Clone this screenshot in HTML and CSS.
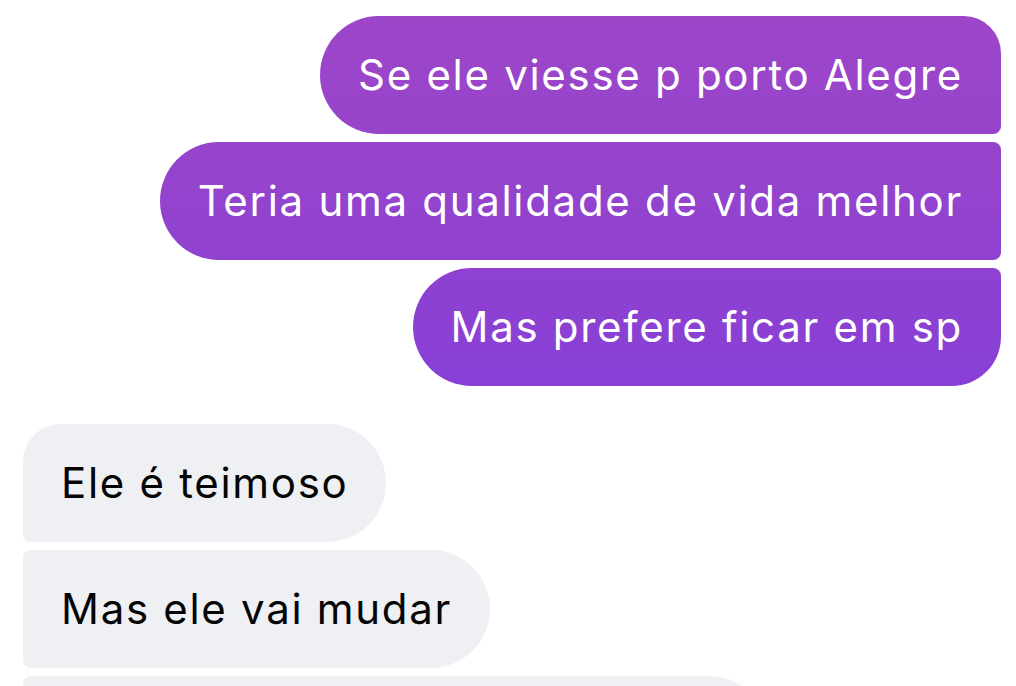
FILE: index.html
```html
<!DOCTYPE html>
<html lang="pt">
<head>
<meta charset="utf-8">
<link rel="stylesheet" href="styles.css">
</head>
<body>
<div class="chat">
  <div class="group group-out">
    <div class="bubble out first">Se ele viesse p porto Alegre</div>
    <div class="bubble out">Teria uma qualidade de vida melhor</div>
    <div class="bubble out last">Mas prefere ficar em sp</div>
  </div>
  <div class="group group-in">
    <div class="bubble in first">Ele é teimoso</div>
    <div class="bubble in">Mas ele vai mudar</div>
    <div class="bubble in">Mas ele não vai mudar tão fácil</div>
  </div>
</div>
</body>
</html>
```
FILE: styles.css
```css
html, body {
  margin: 0;
  padding: 0;
  background: #ffffff;
  overflow: hidden;
}
body {
  width: 1016px;
  height: 686px;
  font-family: "Inter", "Liberation Sans", sans-serif;
}
.chat {
  display: flex;
  flex-direction: column;
  gap: 38px;
  padding: 16px 15px 0 23px;
}
.group {
  display: flex;
  flex-direction: column;
  gap: 8px;
}
.group-out {
  align-items: flex-end;
}
.group-in {
  align-items: flex-start;
}
.bubble {
  font-size: 42px;
  line-height: 50px;
  padding: 34px 38px 34px 38px;
  white-space: nowrap;
  letter-spacing: 1.7px;
}
.out {
  color: #ffffff;
  background: linear-gradient(180deg, #9e46c8 0px, #9343cd 200px, #873fd7 400px) fixed;
  border-radius: 60px 8px 8px 60px;
}
.out.first {
  border-top-right-radius: 38px;
}
.out.last {
  border-bottom-right-radius: 50px;
}
.in {
  color: #050505;
  background: #eff0f4;
  border-radius: 8px 60px 60px 8px;
}
.in.first {
  border-top-left-radius: 38px;
}
```
